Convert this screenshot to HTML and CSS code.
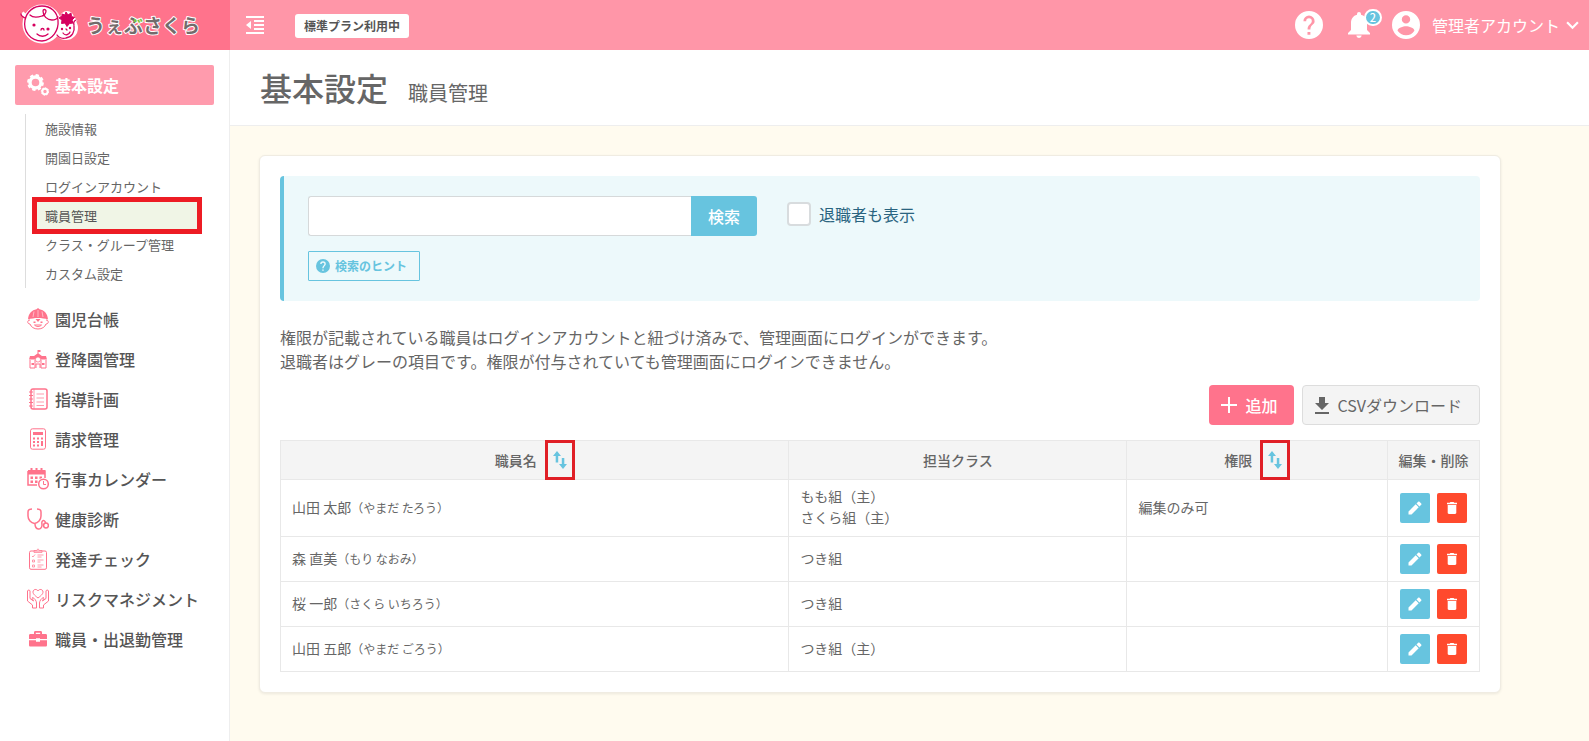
FILE: index.html
```html
<!DOCTYPE html>
<html lang="ja">
<head>
<meta charset="utf-8">
<meta name="viewport" content="width=device-width, initial-scale=1">
<title>基本設定 職員管理</title>
<link rel="stylesheet" href="styles.css">
</head>
<body>
<svg class="sprite" aria-hidden="true">
  <symbol id="i-help" viewBox="0 0 24 24"><path d="M12 0a12 12 0 1 0 0 24 12 12 0 0 0 0-24zm1.200 20.300h-2.500v-2.400h2.500zm2.500-9.100-1.100 1.100c-.9.900-1.400 1.700-1.400 3.600h-2.400v-.6c0-1.300.5-2.500 1.400-3.400l1.500-1.500c.4-.4.700-1 .7-1.700a2.400 2.400 0 0 0-4.800 0H7.200a4.800 4.800 0 0 1 9.600 0c0 1-.4 1.900-1.100 2.500z"/></symbol>
  <symbol id="i-sort" viewBox="0 0 14 18"><path d="M4 0 0 5h2.700v6.500h2.500V5H8zM10 18l4-5h-2.700V7H8.800v6H6z"/></symbol>
  <symbol id="i-edit" viewBox="0 0 14 14"><path d="M.5 10.500v3h3l7.200-7.200-3-3zM13.200 3.800c.4-.4.4-.9 0-1.300L11.500.8c-.4-.4-.9-.4-1.300 0L8.500 2.500l3 3z"/></symbol>
  <symbol id="i-trash" viewBox="0 0 10 12"><path d="M.7 3h8.600v7.800c0 .7-.5 1.200-1.200 1.200H1.900C1.200 12 .7 11.500.7 10.800zM0 .8h2.700L3.400 0h3.200l.7.800H10v1.400H0z"/></symbol>
</svg>

<header class="topbar">
  <a class="brand" href="#" aria-label="うぇぶさくら">
    <svg class="brand-logo" viewBox="0 0 190 46">
      <defs>
        <radialGradient id="leaf" gradientUnits="userSpaceOnUse" cx="120" cy="18" r="6">
          <stop offset="0" stop-color="#7cc242"/><stop offset=".98" stop-color="#7cc242"/><stop offset="1" stop-color="#736b6b"/>
        </radialGradient>
      </defs>
      <g fill="#fff" stroke="#fff" stroke-width="4" stroke-linejoin="round">
        <circle cx="22" cy="22" r="17.500"/><circle cx="46" cy="26" r="10"/><circle cx="47" cy="16" r="5"/><path d="M2 11l5 4M54 19l2-2"/>
      </g>
      <g fill="none" stroke="#d6005f" stroke-width="1.300" stroke-linecap="round">
        <path d="M5 18C7 9 14 4 22 4c9 0 15 6 16 14 1 10-5 20-16 21C10 39 3 29 5 18zM5 16c-2-1-4-2-4-4M22 14c2 0 4-3 4-5s-3-2-3 0c0 5 4 9 9 9 3 0 5-1 6-3M22 14c-6 2-10 1-12-1"/>
        <path d="M37 33c2 3 6 4 9 3 6-1 9-6 8-12M54 23c-1-3 0-4 2-5"/>
        <path d="M17 32c3 3 8 3 11 0M21 28c0-2 3-2 3 0M43 31c2 3 6 2 7-1M46 27l1 1"/>
      </g>
      <g fill="#d6005f">
        <circle cx="14" cy="23" r="1.600"/><circle cx="28" cy="27" r="1.600"/><circle cx="42" cy="27" r="1.200"/><circle cx="50" cy="26" r="1.200"/>
        <path d="m46 10 2 3 3-2 .5 3.500 3 1-2.500 2.500 1 3-3.500.5-2.500 3-2-3.500-3.500.5.500-3.500-3-2 3-2V12l3 1z" stroke="#d6005f" stroke-width="1" stroke-linejoin="round"/>
      </g>
      <text class="brand-text" x="66" y="31">うぇぶさくら</text>
    </svg>
  </a>
  <button class="icon-btn" type="button" aria-label="メニューを閉じる">
    <svg class="ic-menu" viewBox="0 0 18 18"><path d="M0 0h18v2H0zM8 4h10v2H8zM8 8h10v2H8zM8 12h10v2H8zM0 16h18v2H0zM5 5v8L0 9z"/></svg>
  </button>
  <span class="plan">標準プラン利用中</span>
  <div class="tools">
    <button class="icon-btn" type="button" aria-label="ヘルプ"><svg class="ic-28"><use href="#i-help"/></svg></button>
    <button class="icon-btn bell" type="button" aria-label="お知らせ">
      <svg class="ic-bell" viewBox="0 0 22 26"><path d="M11 26a2.700 2.700 0 0 0 2.700-2.500H8.300A2.700 2.700 0 0 0 11 26zM19 18v-7c0-4-2.200-7.300-6-8.200V2a2 2 0 0 0-4 0v.8C5.200 3.700 3 7 3 11v7l-3 3v1.500h22V21z"/></svg>
      <span class="count">2</span>
    </button>
    <button class="account" type="button">
      <svg class="ic-28" viewBox="0 0 28 28"><path fill-rule="evenodd" d="M14 0a14 14 0 1 0 0 28 14 14 0 0 0 0-28zm0 4.200a4.200 4.200 0 1 1 0 8.400 4.200 4.200 0 0 1 0-8.400zm0 20c-3.500 0-6.600-1.800-8.400-4.500 0-2.800 5.600-4.400 8.400-4.400s8.400 1.600 8.400 4.400A10 10 0 0 1 14 24.200z"/></svg>
      <span>管理者アカウント</span>
      <svg class="ic-chev" viewBox="0 0 12 8"><path d="m1 1 5 5 5-5"/></svg>
    </button>
  </div>
</header>

<div class="shell">
  <nav class="sidebar">
    <a class="nav-item active" href="#">
      <svg class="nav-ic" viewBox="0 0 22 22"><g fill="none" stroke="#fff"><circle cx="8.500" cy="8.500" r="5.500" stroke-width="3.400"/><circle cx="8.500" cy="8.500" r="7.400" stroke-width="2" stroke-dasharray="3.300 2.500"/><circle cx="18" cy="17.500" r="2.700" stroke-width="2"/><circle cx="18" cy="17.500" r="3.700" stroke-width="1" stroke-dasharray="1.600 1.200"/></g></svg>
      <span>基本設定</span>
    </a>
    <div class="subnav">
      <a href="#">施設情報</a>
      <a href="#">開園日設定</a>
      <a href="#">ログインアカウント</a>
      <a class="current" href="#">職員管理</a>
      <a href="#">クラス・グループ管理</a>
      <a href="#">カスタム設定</a>
    </div>
    <a class="nav-item" href="#">
      <svg class="nav-ic" viewBox="0 0 22 22"><path fill="currentColor" d="M1 11.500C1.500 5 5 2 9.500 1.200L11 0l1.500 1.200C17 2 20.500 5 21 11.500c-6-2-14-2-20 0z"/><path class="ln" d="M3 12c-3 0-3 4 0 4 1 3 4 5 8 5s7-2 8-5c3 0 3-4 0-4M7.500 17c2 2 5 2 7 0z"/><path stroke="#fff" stroke-width=".5" fill="none" d="M11 2v7M7 3.500 6 9M15 3.500 16 9"/><path fill="currentColor" d="M6.500 13.500h2V15h-2zM13.500 13.500h2V15h-2zM8.500 11h5L11 14z"/></svg>
      <span>園児台帳</span>
    </a>
    <a class="nav-item" href="#">
      <svg class="nav-ic" viewBox="0 0 22 22"><path fill="currentColor" d="M10.500 2h3v2h-2v1.500L15 8h4l1 3.500H2L3 8h4l3.500-2.500z"/><path class="ln" d="M3 12v8h5v-8M14 12v8h5v-8M9 20v-4h4v4"/><circle cx="11" cy="11.500" r="2.600" fill="#fff" stroke="currentColor" stroke-width=".8"/><path fill="currentColor" d="M4.500 15h2.500v2H4.500zM15 15h2.500v2H15z"/></svg>
      <span>登降園管理</span>
    </a>
    <a class="nav-item" href="#">
      <svg class="nav-ic" viewBox="0 0 22 22"><rect x="4" y="1" width="16" height="20" rx="2" class="ln md"/><path class="ln fine" d="M7 1v20M9.500 6H17M9.500 10H17M9.500 14H17M9.500 17.500H17"/><path class="ln" d="M2 4h4M2 7.500h4M2 11h4M2 14.500h4M2 18h4"/></svg>
      <span>指導計画</span>
    </a>
    <a class="nav-item" href="#">
      <svg class="nav-ic" viewBox="0 0 22 22"><rect x="3.500" y=".8" width="15" height="20.400" rx="2" class="ln"/><path fill="currentColor" d="M6 4h10v3H6zM6 9.500h2v2H6zM10 9.500h2v2h-2zM14 9.500h2v2h-2zM6 13h2v2H6zM10 13h2v2h-2zM14 13h2v5h-2zM6 16.500h2v2H6zM10 16.500h2v2h-2z"/></svg>
      <span>請求管理</span>
    </a>
    <a class="nav-item" href="#">
      <svg class="nav-ic" viewBox="0 0 22 22"><path class="ln md" d="M1 3h17v7M1 3v14h9"/><path fill="currentColor" d="M1 2h17v4.500H1zM3.500 0h2v4h-2zM8.500 0h2v4h-2zM13.500 0h2v4h-2zM3.500 8.500H6V11H3.500zM8 8.500h2.500V11H8zM12.500 8.500H15V10l-2.500 1zM3.500 12.500H6V15H3.500zM8 12.500h2.500V15H8z"/><circle class="ln md" cx="16.500" cy="16" r="4.800"/><path class="ln" d="M16.500 13v3.500h2.500"/></svg>
      <span>行事カレンダー</span>
    </a>
    <a class="nav-item" href="#">
      <svg class="nav-ic" viewBox="0 0 22 22"><path class="ln md" d="M5 1C2 1 1 2 1 4v4c0 4 3 7 6.500 7.500C11 15 14 12 14 8V4c0-2-1-3-4-3M8 15.500c0 7 6.500 7 7 2 .2-3-1-3 .5-4.500 1-1 3 0 3 2"/><circle class="ln md" cx="19" cy="17.500" r="2.400"/></svg>
      <span>健康診断</span>
    </a>
    <a class="nav-item" href="#">
      <svg class="nav-ic" viewBox="0 0 22 22"><rect x="2.500" y="3" width="17" height="18.300" rx="1.500" class="ln"/><path class="ln fine" d="M7 4.500V2.500h2.500L11 .8l1.500 1.700H15v2zM5 8l1 1 2-2.500M10.500 7h6M10.500 9h4M10.500 12h6M10.500 14h3M10.500 17h6M10.500 19h4"/><path class="ln fine" d="M5.500 12h2v2h-2zM5.500 17h2v2h-2z"/></svg>
      <span>発達チェック</span>
    </a>
    <a class="nav-item" href="#">
      <svg class="nav-ic" viewBox="0 0 22 22"><path class="ln" d="M11 10C7 7 6 5.500 6 4c0-2.800 3.700-3.500 5-1 1.300-2.500 5-1.800 5 1 0 1.500-1 3-5 6zM.5 3v10l5 4v3h4v-5c0-2-2-5-4-5.500-1.200.5.5 2 1 3.500L3 10.500V3c0-1.200-2.500-1.200-2.500 0zM21.500 3v10l-5 4v3h-4v-5c0-2 2-5 4-5.500 1.200.5-.5 2-1 3.500l3.500-2.500V3c0-1.200 2.500-1.200 2.500 0z"/></svg>
      <span>リスクマネジメント</span>
    </a>
    <a class="nav-item" href="#">
      <svg class="nav-ic" viewBox="0 0 22 22"><path fill="currentColor" fill-rule="evenodd" d="M7 6V4.500C7 3.500 7.500 3 8.500 3h5c1 0 1.500.5 1.500 1.500V6h3.500c1 0 1.500.5 1.500 1.500V11h-7v-.8H9V11H2V7.500C2 6.500 2.500 6 3.500 6zm1.800 0h4.400V4.700H8.800zM2 12.200h7v1.600h4v-1.600h7V17c0 1-.5 1.500-1.500 1.500h-15C2.500 18.500 2 18 2 17z"/></svg>
      <span>職員・出退勤管理</span>
    </a>
  </nav>

  <main class="main">
    <div class="page-head">
      <h1>基本設定</h1>
      <h2>職員管理</h2>
    </div>
    <section class="card">
      <form class="search">
        <div class="search-box">
          <input class="search-input" type="text" aria-label="検索キーワード">
          <button class="search-btn" type="button">検索</button>
        </div>
        <label class="check"><input type="checkbox"><span>退職者も表示</span></label>
        <button class="hint" type="button"><svg class="ic-14"><use href="#i-help"/></svg>検索のヒント</button>
      </form>
      <p class="note">権限が記載されている職員はログインアカウントと紐づけ済みで、管理画面にログインができます。<br>退職者はグレーの項目です。権限が付与されていても管理画面にログインできません。</p>
      <div class="actions">
        <button class="btn btn-add" type="button"><svg class="ic-plus" viewBox="0 0 16 16"><path d="M7 0h2v7h7v2H9v7H7V9H0V7h7z"/></svg>追加</button>
        <button class="btn btn-csv" type="button"><svg class="ic-dl" viewBox="0 0 14 17"><path d="M4 0h6v6h4l-7 7-7-7h4zM0 15h14v2H0z"/></svg>CSVダウンロード</button>
      </div>
      <table class="staff">
        <colgroup><col class="c-name"><col class="c-class"><col><col class="c-act"></colgroup>
        <thead>
          <tr>
            <th><span class="th-sort">職員名<button class="sort" type="button" aria-label="職員名で並べ替え"><svg class="ic-sort"><use href="#i-sort"/></svg></button></span></th>
            <th>担当クラス</th>
            <th><span class="th-sort">権限<button class="sort" type="button" aria-label="権限で並べ替え"><svg class="ic-sort"><use href="#i-sort"/></svg></button></span></th>
            <th class="th-act">編集・削除</th>
          </tr>
        </thead>
        <tbody>
          <tr>
            <td>山田 太郎<small>（やまだ たろう）</small></td>
            <td>もも組（主）<br>さくら組（主）</td>
            <td>編集のみ可</td>
            <td><div class="ops"><button class="op edit" type="button" aria-label="編集"><svg class="ic-14"><use href="#i-edit"/></svg></button><button class="op del" type="button" aria-label="削除"><svg class="ic-trash"><use href="#i-trash"/></svg></button></div></td>
          </tr>
          <tr>
            <td>森 直美<small>（もり なおみ）</small></td>
            <td>つき組</td>
            <td></td>
            <td><div class="ops"><button class="op edit" type="button" aria-label="編集"><svg class="ic-14"><use href="#i-edit"/></svg></button><button class="op del" type="button" aria-label="削除"><svg class="ic-trash"><use href="#i-trash"/></svg></button></div></td>
          </tr>
          <tr>
            <td>桜 一郎<small>（さくら いちろう）</small></td>
            <td>つき組</td>
            <td></td>
            <td><div class="ops"><button class="op edit" type="button" aria-label="編集"><svg class="ic-14"><use href="#i-edit"/></svg></button><button class="op del" type="button" aria-label="削除"><svg class="ic-trash"><use href="#i-trash"/></svg></button></div></td>
          </tr>
          <tr>
            <td>山田 五郎<small>（やまだ ごろう）</small></td>
            <td>つき組（主）</td>
            <td></td>
            <td><div class="ops"><button class="op edit" type="button" aria-label="編集"><svg class="ic-14"><use href="#i-edit"/></svg></button><button class="op del" type="button" aria-label="削除"><svg class="ic-trash"><use href="#i-trash"/></svg></button></div></td>
          </tr>
        </tbody>
      </table>
    </section>
  </main>
</div>
</body>
</html>
```

FILE: styles.css
```css
* { box-sizing: border-box; }
body {
  margin: 0;
  min-height: 100vh;
  display: flex;
  flex-direction: column;
  background: #fffbef;
  color: #666;
  font: 16px/24px "Noto Sans CJK JP", sans-serif;
}
button, input { font: inherit; color: inherit; margin: 0; }
button { cursor: pointer; border: 0; padding: 0; background: none; }
a { color: inherit; text-decoration: none; }
svg { display: block; fill: currentColor; flex: none; }
.sprite { display: none; }

/* top bar */
.topbar {
  display: flex;
  align-items: center;
  height: 50px;
  background: #ff96a8;
  color: #fff;
}
.brand { width: 230px; height: 50px; padding: 2px 20px; background: #ff738c; }
.brand-logo { width: 190px; height: 46px; }
.brand-text {
  font-size: 19px;
  font-weight: 700;
  fill: url(#leaf);
  stroke: #fff;
  stroke-width: 2px;
  stroke-linejoin: round;
  paint-order: stroke;
}
.icon-btn { display: block; position: relative; }
.topbar > .icon-btn { margin-left: 16px; }
.ic-menu { width: 18px; height: 18px; }
.plan {
  margin: 2px 0 0 31px;
  padding: 0 9px;
  border-radius: 3px;
  background: #fff;
  color: #555;
  font-size: 12px;
  font-weight: 700;
  line-height: 24px;
}
.tools { display: flex; align-items: center; margin-left: auto; padding-right: 10px; }
.ic-28 { width: 28px; height: 28px; }
.bell { margin: 0 22px 0 25px; }
.ic-bell { width: 22px; height: 26px; }
.count {
  position: absolute;
  left: 16px;
  top: -3px;
  width: 18px;
  height: 17px;
  border: 2px solid #fff;
  border-radius: 9px;
  background: #67c4df;
  font-size: 11px;
  font-weight: 500;
  line-height: 13px;
}
.account { display: flex; align-items: center; }
.account span { margin: 0 6px 0 12px; }
.ic-chev { width: 13px; height: 9px; fill: none; stroke: #fff; stroke-width: 2; }

/* side navigation */
.shell { display: flex; flex: 1; }
.sidebar {
  flex: none;
  width: 230px;
  padding: 15px;
  background: #fff;
  border-right: 1px solid #eee;
}
.nav-item {
  display: flex;
  align-items: center;
  gap: 6px;
  height: 40px;
  padding-left: 12px;
  border-radius: 2px;
  color: #ff738c;
  font-weight: 500;
}
.nav-item span { color: #555; white-space: nowrap; }
.nav-item.active { background: #ff9bad; font-weight: 700; }
.nav-item.active span { color: #fff; }
.nav-ic { width: 22px; height: 22px; }
.ln { fill: none; stroke: currentColor; stroke-width: 1; }
.ln.md { stroke-width: 1.5; }
.ln.fine { stroke-width: .7; }
.subnav { margin: 9px 0 11px 10px; border-left: 1px solid #ddd; font-size: 13px; }
.subnav a { display: block; margin: 0 17px 0 11px; padding-left: 8px; line-height: 29px; }
.subnav .current { position: relative; background: #f0f5e6; color: #555; }
.subnav .current::after {
  content: "";
  position: absolute;
  inset: -4px -5px;
  border: 5px solid #ed1c24;
}

/* page */
.main { flex: 1; min-width: 0; }
.page-head {
  display: flex;
  align-items: baseline;
  gap: 20px;
  padding: 13px 30px 14px;
  background: #fff;
  border-bottom: 1px solid #eee;
}
h1, h2 { margin: 0; font-weight: 400; }
h1 { font-size: 32px; font-weight: 500; line-height: 48px; }
h2 { font-size: 20px; }
.card {
  max-width: 1242px;
  margin: 29px;
  padding: 20px;
  border: 1px solid #f0ece2;
  border-radius: 6px;
  background: #fff;
  box-shadow: 0 1px 3px rgba(0, 0, 0, .08);
}
.search {
  display: grid;
  grid-template-columns: 449px auto;
  justify-content: start;
  gap: 15px 30px;
  padding: 20px 24px;
  border-left: 4px solid #67c4df;
  border-radius: 4px;
  background: #edf9fb;
}
.search-box { display: flex; height: 40px; }
.search-input {
  flex: 1;
  min-width: 0;
  border: 1px solid #d6d9da;
  border-right: 0;
  border-radius: 3px 0 0 3px;
  background: #fff;
  padding: 0 10px;
}
.search-btn { width: 66px; border-radius: 0 3px 3px 0; background: #67c4df; color: #fff; font-weight: 500; }
.check { display: flex; align-items: center; gap: 8px; height: 36px; color: #2a6480; }
.check input {
  appearance: none;
  width: 24px;
  height: 24px;
  border: 2px solid #d8dcde;
  border-radius: 4px;
  background: #fff;
}
.hint {
  display: flex;
  align-items: center;
  justify-self: start;
  gap: 5px;
  height: 30px;
  padding: 0 12px 0 7px;
  border: 1px solid #67c4df;
  border-radius: 1px;
  color: #67c4df;
  font-size: 12px;
  font-weight: 700;
}
.ic-14 { width: 14px; height: 14px; }
.note { margin: 24px 0 12px; }
.actions { display: flex; justify-content: flex-end; gap: 8px; margin-bottom: 15px; }
.btn { display: flex; align-items: center; gap: 8px; height: 40px; border-radius: 4px; }
.btn-add { padding: 0 17px 0 12px; background: #ff738c; color: #fff; font-weight: 500; }
.btn-csv { padding: 0 17px 0 12px; gap: 8px; border: 1px solid #ddd; background: #f4f4f4; }
.ic-plus { width: 16px; height: 16px; }
.ic-dl { width: 14px; height: 17px; }

/* staff table */
.staff { width: 100%; border-collapse: collapse; table-layout: fixed; font-size: 14px; line-height: 21px; }
.c-name { width: 42.4%; }
.c-class { width: 28.2%; }
.c-act { width: 92px; }
.staff th, .staff td { border: 1px solid #e8e8e8; }
.staff th { height: 39px; padding: 0; background: #f4f4f4; font-weight: 500; }
.staff td { height: 45px; padding: 6px 11px 8px; }
.staff td:last-child { padding: 7px 12px; }
.staff small { font-size: 12px; }
.th-sort { display: flex; align-items: center; justify-content: center; gap: 8px; margin: -1px 0; }
.sort { padding: 8px 5px; border: 3px solid #e01f26; color: #67c4df; }
.ic-sort { width: 14px; height: 18px; }
.ops { display: flex; gap: 7px; }
.op { display: flex; align-items: center; justify-content: center; width: 30px; height: 30px; border-radius: 2px; color: #fff; }
.edit { background: #67c4df; }
.del { background: #ff4a2d; }
.ic-trash { width: 10px; height: 12px; }
```
